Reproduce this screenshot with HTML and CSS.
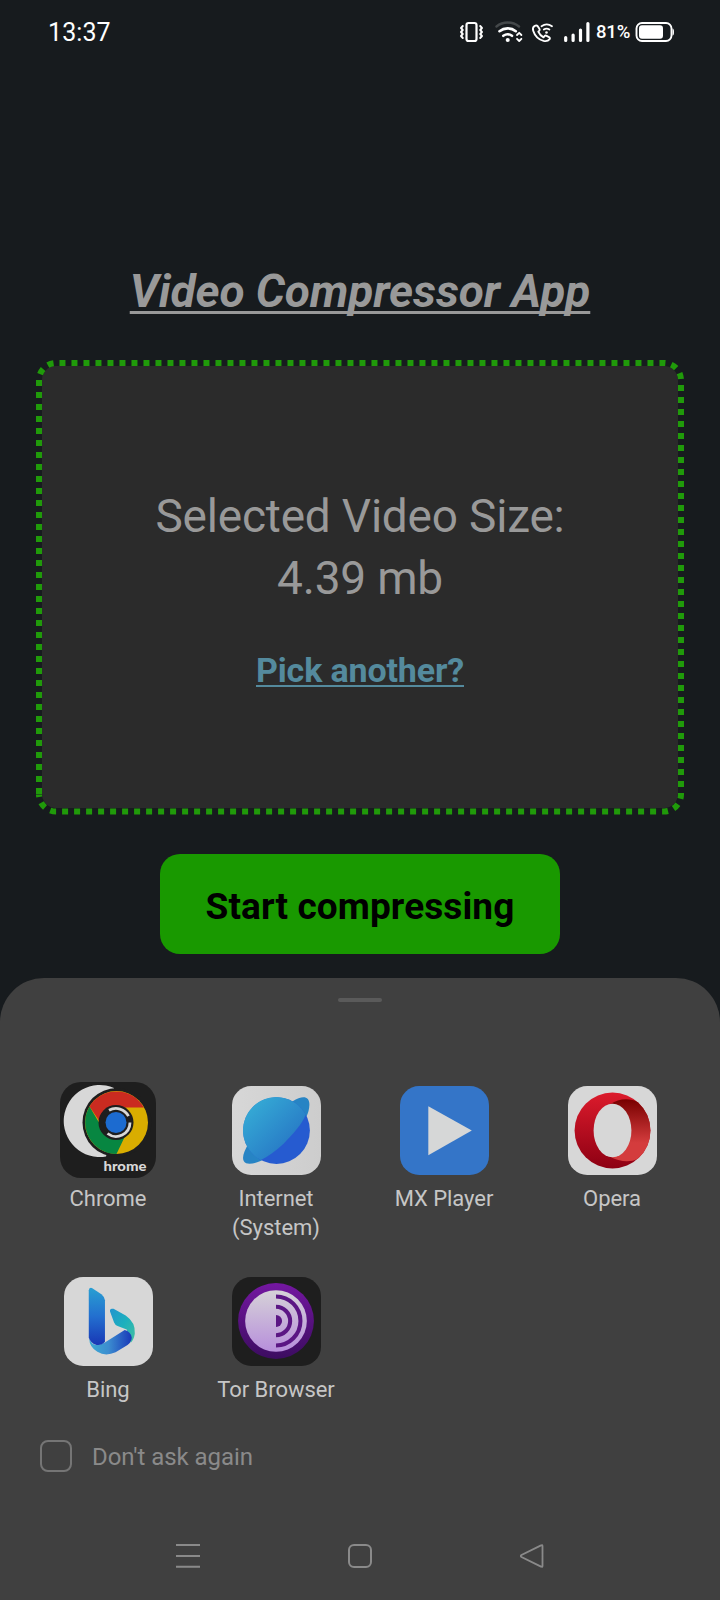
FILE: index.html
```html
<!DOCTYPE html>
<html lang="en">
<head>
<meta charset="utf-8">
<meta name="viewport" content="width=device-width">
<title>Video Compressor App</title>
<link rel="stylesheet" href="styles.css">
</head>
<body>
<div class="screen">
  <header class="status">
    <span class="clock">13:37</span>
    <div class="status-right">
      <svg class="status-icons" width="134" height="28" viewBox="456 18 134 28" fill="none" stroke="#fff" stroke-linecap="round" stroke-linejoin="round">
        <rect x="466.500" y="23" width="10" height="18" rx="2" stroke-width="2.200"/>
        <path d="M462.800 26l-1.800 2 1.800 2-1.800 2 1.800 2-1.800 2 1.800 2M480.200 26l1.800 2-1.800 2 1.800 2-1.800 2 1.800 2-1.800 2" stroke-width="1.900"/>
        <path d="M496.500 26.500a18 18 0 0 1 22.500 0" stroke="#44484a" stroke-width="2.400"/>
        <path d="M499.500 31.200a13 13 0 0 1 16.300 0M503.300 35.800a7.500 7.500 0 0 1 8.700 0" stroke-width="2.600"/>
        <circle cx="507.700" cy="40" r="2" fill="#fff" stroke="none"/>
        <path d="M517 35l2.200-2.200 2.200 2.200M517 38.800l2.200 2.200 2.200-2.200" stroke-width="1.800"/>
        <path d="M534.500 26q-2.300 1.600-1.300 4.700c1.600 5 5.300 8.800 10.400 10.200q4 .9 6-1.800 .8-1.200-.6-2l-2.400-1.300q-1.200-.6-2.100.4l-1 1.100q-3.600-1.800-5.200-5.600l1-1q.8-.9.1-2l-1.700-2.500q-1.200-1.400-3.200-.2z" stroke-width="1.900"/>
        <path d="M541.500 26.200a9 9 0 0 1 10.500 0M543.800 29.600a5 5 0 0 1 5.600 0" stroke-width="1.800"/>
        <circle cx="546.500" cy="32.500" r="1.300" fill="#fff" stroke="none"/>
        <path d="M565.700 37.500v3M573.100 35v5.500M580.500 30v10.500M587.900 23.500v17" stroke-width="3.200"/>
      </svg>
      <span class="percent">81%</span>
      <svg class="battery" width="40" height="22" viewBox="635 21 40 22">
        <rect x="636.500" y="23" width="35" height="18" rx="5.500" fill="none" stroke="#fff" stroke-width="1.900"/>
        <rect x="639" y="25.200" width="24" height="13.600" rx="3" fill="#fff"/>
        <path d="M672.500 28.500q1.500 0 1.500 3.500t-1.500 3.500z" fill="#fff"/>
      </svg>
    </div>
  </header>

  <main class="app">
    <h1 class="title">Video Compressor App</h1>
    <section class="picker">
      <div class="picker-body">
        <p class="size">Selected Video Size:<br>4.39 mb</p>
        <a class="again">Pick another?</a>
      </div>
      <svg class="outline" viewBox="36 360 648 455">
        <path d="M39 794V380A17 17 0 0 1 56 363H664A17 17 0 0 1 681 380V794.500A17 17 0 0 1 664 811.500H56A17 17 0 0 1 39 794.500" fill="none" stroke="#209a0a" stroke-width="6" stroke-dasharray="6 6"/>
      </svg>
    </section>
    <button class="start">Start compressing</button>
  </main>

  <section class="sheet">
    <div class="handle"></div>
    <div class="apps">
      <div class="app-item">
        <svg class="app-icon wide" viewBox="0 0 96 96">
          <rect width="96" height="96" rx="21" fill="#1e1e1e"/>
          <path d="M54 6A36 36 0 1 0 46 74.500L56 40z" fill="#d8d8d8"/>
          <circle cx="57" cy="40.500" r="34.500" fill="#1e1e1e"/>
          <circle cx="56.500" cy="40.500" r="31.500" fill="#d9ad00"/>
          <path d="M29.500 24.500A31.500 31.500 0 0 1 83.900 25.500H56L40 40z" fill="#ca2b20"/>
          <path d="M29.500 24.500A31.500 31.500 0 0 0 56.500 72L67.500 49 41 44z" fill="#078641"/>
          <circle cx="56" cy="40.500" r="17.500" fill="#1e1e1e"/>
          <circle cx="56" cy="40.500" r="10.500" fill="#1c6bd0"/>
          <path d="M49 28.300A14 14 0 0 1 68.500 34.200M70 40.500A14 14 0 0 1 47.500 51.500" fill="none" stroke="#d8d8d8" stroke-width="2.800"/>
          <text class="badge-text" x="43.500" y="89" textLength="43" lengthAdjust="spacingAndGlyphs">hrome</text>
        </svg>
        <span class="label">Chrome</span>
      </div>
      <div class="app-item">
        <svg class="app-icon" viewBox="0 0 88 88">
          <defs>
            <linearGradient id="planet" x1="0" y1="0" x2="1" y2="1"><stop offset="0" stop-color="#37b3d8"/><stop offset="1" stop-color="#2368c0"/></linearGradient>
            <linearGradient id="tile" x1="0" y1="0" x2="1" y2="0"><stop offset="0" stop-color="#d7d7d7"/><stop offset="1" stop-color="#cdcdcd"/></linearGradient>
          </defs>
          <rect width="88" height="88" rx="19" fill="url(#tile)"/>
          <path d="M60 15C70 9 77 10 76.500 19C76 34 61 49 50 59C37 71 22 79 14 76.500C8 73 12 65 15.500 58z" fill="#2784c4"/>
          <circle cx="44" cy="44" r="33" fill="#265bd0"/>
          <path d="M28.500 73.200A33 33 0 1 1 73 28.500C69 38 60 48 51 57Q39 68 28.500 73.200z" fill="url(#planet)"/>
        </svg>
        <span class="label">Internet<br>(System)</span>
      </div>
      <div class="app-item">
        <svg class="app-icon" viewBox="0 0 88 88">
          <rect width="88" height="88" rx="19" fill="#3475c8"/>
          <path d="M28 20L71 44 28 68.500z" fill="#d6d7d7"/>
        </svg>
        <span class="label">MX Player</span>
      </div>
      <div class="app-item">
        <svg class="app-icon" viewBox="0 0 88 88">
          <defs>
            <linearGradient id="ring" x1="0" y1="0" x2="0" y2="1"><stop offset="0" stop-color="#dc1b2c"/><stop offset="1" stop-color="#8d0013"/></linearGradient>
            <linearGradient id="inner" x1="0" y1="0" x2="0" y2="1"><stop offset="0" stop-color="#780000"/><stop offset=".7" stop-color="#d43c3d"/><stop offset="1" stop-color="#d43c3d"/></linearGradient>
          </defs>
          <rect width="88" height="88" rx="19" fill="#d7d7d7"/>
          <circle cx="44" cy="44" r="37.500" fill="url(#ring)"/>
          <path d="M42 18C50 12 62 12 69 16Q81.500 27 81.500 44T69 72C62 76 50 75 42 70z" fill="url(#inner)"/>
          <ellipse cx="44" cy="44" rx="18.700" ry="26.500" fill="#d7d7d7"/>
        </svg>
        <span class="label">Opera</span>
      </div>
      <div class="app-item">
        <svg class="app-icon" viewBox="0 0 88 88">
          <defs>
            <linearGradient id="stem" x1="0" y1="0" x2="0" y2="1"><stop offset="0" stop-color="#299fd2"/><stop offset=".5" stop-color="#236fcf"/><stop offset="1" stop-color="#1837b5"/></linearGradient>
            <linearGradient id="sweep" x1="0" y1="0" x2="1" y2="0"><stop offset="0" stop-color="#3cabd3"/><stop offset=".45" stop-color="#3c8dd0"/><stop offset="1" stop-color="#1838b8"/></linearGradient>
            <linearGradient id="leaf" x1="0" y1="0" x2="1" y2="1"><stop offset="0" stop-color="#2294cf"/><stop offset=".5" stop-color="#1cb0bd"/><stop offset="1" stop-color="#45bf9f"/></linearGradient>
          </defs>
          <rect width="88" height="88" rx="19" fill="#d7d7d7"/>
          <path d="M45.500 34Q45 30.500 49 31.500L61 38Q71 45 70 56Q69 62 66 65L62 52 53 48.500Q50.500 47.500 49.500 45z" fill="url(#leaf)"/>
          <path d="M25 61Q28 68 33 67Q36 67 40 65L60 52.500Q66 54 67 60Q67 65 60 69L51 74.500Q41 79 33 74Q25 69 25 61z" fill="url(#sweep)"/>
          <path d="M24.500 13Q25 10 28 11L37 17Q40.500 20 40.500 23V64C35 70 27 67 24.500 60z" fill="url(#stem)"/>
        </svg>
        <span class="label">Bing</span>
      </div>
      <div class="app-item">
        <svg class="app-icon" viewBox="0 0 88 88">
          <defs>
            <linearGradient id="onion" x1="0" y1="0" x2="0" y2="1"><stop offset="0" stop-color="#7417a1"/><stop offset="1" stop-color="#3c0c60"/></linearGradient>
            <linearGradient id="pale" x1="0" y1="0" x2="0" y2="1"><stop offset="0" stop-color="#d6d2d8"/><stop offset="1" stop-color="#b78edb"/></linearGradient>
          </defs>
          <rect width="88" height="88" rx="19" fill="#1e1e1e"/>
          <circle cx="43.500" cy="43.500" r="37.500" fill="url(#onion)"/>
          <circle cx="43.500" cy="43.500" r="30.500" fill="url(#pale)"/>
          <path d="M43.500 19.300a24.200 24.200 0 0 1 0 48.400M43.500 29.500a14 14 0 0 1 0 28" fill="none" stroke="#5b1684" stroke-width="4"/>
          <path d="M43.500 37.500a6 6 0 0 1 0 12z" fill="#5b1684"/>
        </svg>
        <span class="label">Tor Browser</span>
      </div>
    </div>
    <label class="remember"><span class="box"></span><span class="remember-text">Don't ask again</span></label>
    <nav class="nav">
      <svg width="24" height="24" viewBox="0 0 24 24"><path d="M0 1h24M0 12h24M0 22.800h24" stroke="#8a8a8a" stroke-width="2"/></svg>
      <svg width="24" height="24" viewBox="0 0 24 24"><rect x="1" y="1" width="22" height="22" rx="5" fill="none" stroke="#8a8a8a" stroke-width="2"/></svg>
      <svg width="24" height="24" viewBox="0 0 24 24"><path d="M22.500 2.200v19.600q0 1.700-1.500.8L1.500 13q-1.500-1 0-2L21 1.400q1.500-.9 1.500.8z" fill="none" stroke="#8a8a8a" stroke-width="1.800"/></svg>
    </nav>
  </section>
</div>
</body>
</html>
```
FILE: styles.css
```css
* { box-sizing: border-box; }
body { margin: 0; background: #171b1e; font-family: Roboto, sans-serif; }
h1, p { margin: 0; }
svg { display: block; flex: none; }

.screen { width: 720px; height: 1600px; display: flex; flex-direction: column; overflow: hidden; }

.status { height: 64px; padding: 0 45px 0 48px; display: flex; align-items: center; justify-content: space-between; color: #fff; }
.clock { padding-top: 1px; font-size: 25px; letter-spacing: 0.1px; line-height: 63px; }
.status-right { display: flex; align-items: center; }
.percent { width: 39px; margin-left: 6px; font-size: 18.500px; font-weight: 500; letter-spacing: -0.2px; line-height: 64px; white-space: nowrap; }

.app { height: 914px; display: flex; flex-direction: column; align-items: center; }
.title { margin-top: 195px; height: 64px; line-height: 64px; font-size: 46px; font-weight: 700; font-style: italic; letter-spacing: -0.120px; color: #999; white-space: nowrap; text-decoration: underline; text-decoration-thickness: 2.500px; text-underline-offset: 4px; text-decoration-skip-ink: none; }
.picker { position: relative; width: 648px; height: 455px; margin-top: 37px; padding: 6px 6px 7px; }
.picker-body { height: 100%; border-radius: 14px; background: #2b2b2b; display: flex; flex-direction: column; align-items: center; padding-top: 119px; }
.outline { position: absolute; inset: 0; width: 648px; height: 455px; }
.size { font-size: 46px; line-height: 62px; letter-spacing: -0.200px; color: #999; text-align: center; white-space: nowrap; }
.again { margin-top: 38px; font-size: 34px; line-height: 46px; font-weight: 700; letter-spacing: -0.150px; color: #548a9d; text-decoration: underline; text-decoration-thickness: 2px; text-underline-offset: 3px; text-decoration-skip-ink: none; }
.start { margin-top: 39px; width: 400px; height: 100px; padding: 6px 0 0; border: 0; border-radius: 20px; background: #199900; color: #000; font: 700 37px/50px Roboto, sans-serif; letter-spacing: 0.1px; }

.sheet { height: 622px; border-radius: 44px 44px 0 0; background: #404040; padding-top: 20px; }
.handle { width: 44px; height: 4px; margin: 0 auto; border-radius: 2px; background: #5a5a5a; }
.apps { margin-top: 84px; padding: 0 24px; display: grid; grid-template-columns: repeat(4, 168px); grid-auto-rows: 191px; }
.app-item { display: flex; flex-direction: column; align-items: center; }
.app-icon { width: 89px; height: 89px; }
.app-icon.wide { width: 96px; height: 96px; margin: -4px 0 -3px; }
.badge-text { font: 900 13px Lato, sans-serif; fill: #d8d8d8; }
.label { margin-top: 9px; font-size: 22px; line-height: 29px; letter-spacing: -0.050px; color: #c6c6c6; text-align: center; white-space: nowrap; }
.remember { height: 32px; margin: -28px 0 0 40px; display: flex; align-items: center; gap: 20px; font-size: 24px; letter-spacing: -0.050px; color: #8a8a8a; }
.remember-text { padding-top: 2px; }
.box { width: 32px; height: 32px; border: 2px solid #757575; border-radius: 8px; }
.nav { margin-top: 72px; padding: 0 176px; display: flex; justify-content: space-between; }
```
